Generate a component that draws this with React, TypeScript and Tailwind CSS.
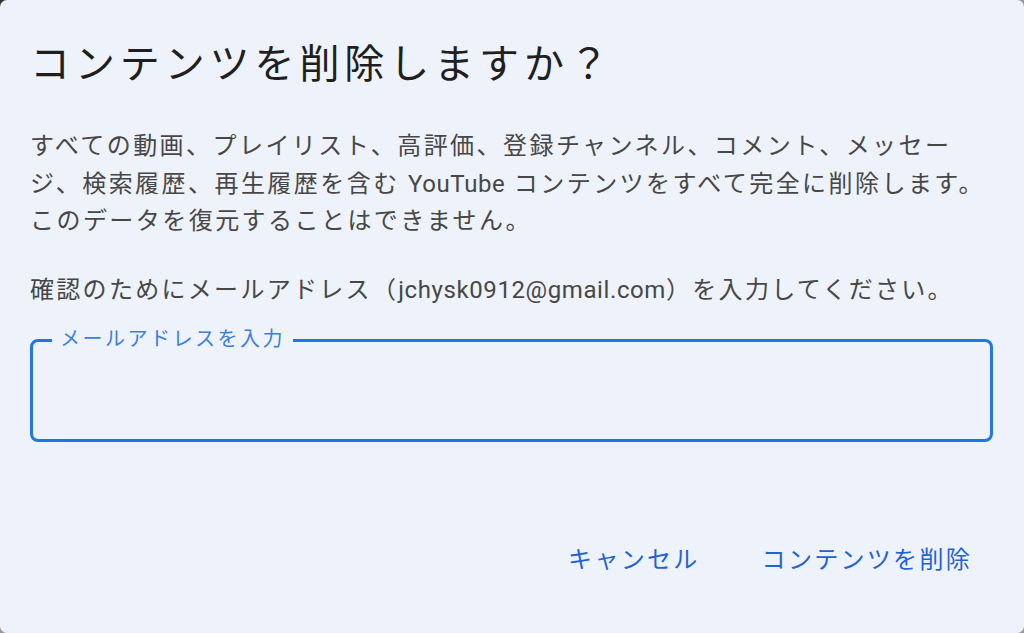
import React from 'react';

const font = { fontFamily: 'Roboto, "Noto Sans CJK JP", sans-serif' };

const App: React.FC = () => {
  return (
    <div className="w-[1024px] h-[633px] bg-gradient-to-br from-[#333333] via-[#9a9a9a] to-[#9a9a9a] overflow-hidden" style={font}>
      <div className="w-full h-full bg-[#eef2fa] rounded-[7px] flex flex-col px-[30px]">
        <h1 className="mt-[37px] text-[40px] leading-[56px] tracking-[4.9px] text-[#1f1f1f] font-normal">
          コンテンツを削除しますか？
        </h1>

        <p className="mt-[35px] text-[24px] leading-[37.5px] tracking-[2.45px] text-[#474747] whitespace-nowrap">
          すべての動画、プレイリスト、高評価、登録チャンネル、コメント、メッセー
          <br />
          ジ、検索履歴、再生履歴を含む <span className="tracking-[0.6px]">YouTube</span> コンテンツをすべて完全に削除します。
          <br />
          このデータを復元することはできません。
        </p>

        <p className="mt-[31px] text-[24px] leading-[37.5px] tracking-[2.3px] text-[#474747] whitespace-nowrap">
          確認のためにメールアドレス（<span className="tracking-[0.6px]">jchysk0912@gmail.com</span>）を入力してください。
        </p>

        <div className="relative mt-[30px] w-[963px] h-[103px] border-[3px] border-[#2176e8] rounded-[8px]">
          <span className="absolute -top-[17px] left-[19px] px-[8px] bg-[#eef2fa] text-[20px] leading-[28px] tracking-[2.5px] text-[#3a7fe0]">
            メールアドレスを入力
          </span>
          <input className="w-full h-full bg-transparent outline-none px-[20px] text-[24px]" />
        </div>

        <div className="mt-auto mb-[55px] flex justify-end gap-[62px] pr-[22px]">
          <button className="text-[24px] leading-[36px] tracking-[2.3px] text-[#1f63d6]">キャンセル</button>
          <button className="text-[24px] leading-[36px] tracking-[2.3px] text-[#1f63d6]">コンテンツを削除</button>
        </div>
      </div>
    </div>
  );
};

export default App;
